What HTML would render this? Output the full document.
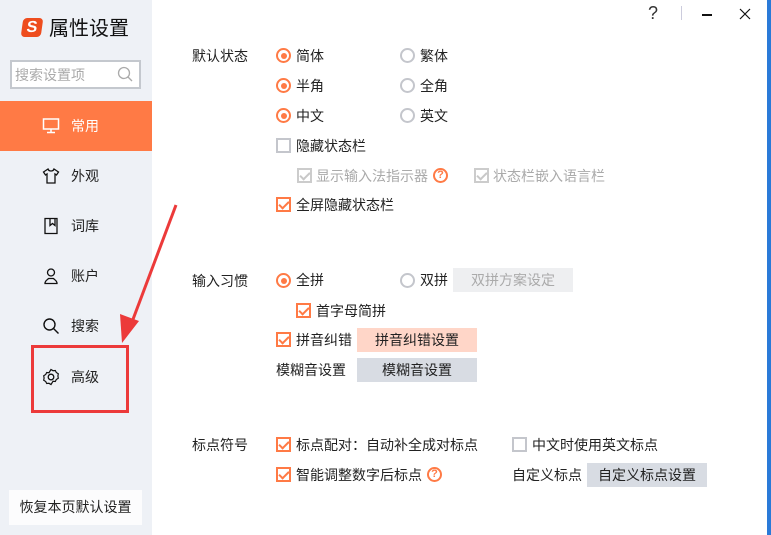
<!DOCTYPE html>
<html><head><meta charset="utf-8"><style>
*{margin:0;padding:0;box-sizing:border-box}
body{width:771px;height:535px;overflow:hidden;background:#fff;font-family:"Liberation Sans","Noto Sans CJK SC",sans-serif;font-size:14px;color:#222;position:relative}
.a{position:absolute;white-space:nowrap;line-height:20px}
#side{position:absolute;left:0;top:0;width:152px;height:535px;background:#eef1f6}
.item{position:absolute;left:0;width:152px;height:50px}
.item svg{position:absolute;left:42px;top:16px}
.item span{position:absolute;left:71px;top:15px;line-height:20px}
.rad{position:absolute;width:15px;height:15px;border-radius:50%;border:2px solid #c4c6cc;background:#fff}
.rad.on{border-color:#ff7a45}
.rad.on::after{content:"";position:absolute;left:2.5px;top:2.5px;width:6px;height:6px;border-radius:50%;background:#ff7a45}
.cb{position:absolute;width:15px;height:15px;border:2px solid #c4c6cc;background:#fff}
.cb.on{border-color:#ff7a45}
.cb.on::after{content:"";position:absolute;left:3px;top:0px;width:4px;height:8px;border:solid #ff7a45;border-width:0 2px 2px 0;transform:rotate(45deg)}
.cb.dis{border-color:#ccc}
.cb.dis::after{content:"";position:absolute;left:3px;top:0px;width:4px;height:8px;border:solid #c8c8c8;border-width:0 2px 2px 0;transform:rotate(45deg)}
.btn{position:absolute;width:120px;height:24px;line-height:24px;text-align:center}
.help{position:absolute;width:15px;height:15px;border-radius:50%;border:2px solid #ff7a45;color:#ff7a45;font-size:11px;font-weight:bold;line-height:11px;text-align:center}
.g{color:#aaa}
</style></head><body>
<div id="side">
  <div style="position:absolute;left:22px;top:18px;width:20px;height:19px;background:#ee4d1e;border-radius:4px;color:#fff;font-weight:bold;font-size:16px;line-height:19px;text-align:center;transform:skewX(-8deg)">S</div>
  <div class="a" style="left:49px;top:16px;font-size:20px;line-height:26px;color:#111">属性设置</div>
  <div style="position:absolute;left:10px;top:60px;width:131px;height:29px;border:2px solid #c4c8ce;background:#fff"></div>
  <div class="a" style="left:15px;top:65px;color:#aaa">搜索设置项</div>
  <svg style="position:absolute;left:117px;top:66px" width="16" height="16"><circle cx="7" cy="7" r="5.5" fill="none" stroke="#aaa" stroke-width="1.3"/><path d="M11 11l4 4" stroke="#aaa" stroke-width="1.3"/></svg>
  <div class="item" style="top:101px;background:#ff7a45;color:#fff">
    <svg width="18" height="18"><rect x="1.5" y="2" width="15" height="10" fill="none" stroke="#fff" stroke-width="1.5"/><path d="M9 12v3M5 15.5h8" stroke="#fff" stroke-width="1.5"/></svg><span>常用</span></div>
  <div class="item" style="top:151px"><svg width="18" height="18"><path d="M6 2L1.5 5l2 3 1.5-1v9h8V7l1.5 1 2-3L12 2c-.5 1.5-1.5 2-3 2S6.5 3.5 6 2z" fill="none" stroke="#111" stroke-width="1.3"/></svg><span>外观</span></div>
  <div class="item" style="top:201px"><svg width="18" height="18"><path d="M3 1.5h12v15H3zM8 1.5v7l2.5-2 2.5 2v-7" fill="none" stroke="#111" stroke-width="1.3"/></svg><span>词库</span></div>
  <div class="item" style="top:251px"><svg width="18" height="18"><circle cx="9" cy="5.5" r="3.5" fill="none" stroke="#111" stroke-width="1.3"/><path d="M3 16.5h12c0-2-1-3-2.5-4l-1-1H6.5l-1 1C4 13.5 3 14.5 3 16.5z" fill="none" stroke="#111" stroke-width="1.3"/></svg><span>账户</span></div>
  <div class="item" style="top:301px"><svg width="18" height="18"><circle cx="7.5" cy="7.5" r="5.5" fill="none" stroke="#111" stroke-width="1.4"/><path d="M11.5 11.5l5 5" stroke="#111" stroke-width="1.4"/></svg><span>搜索</span></div>
  <div class="item" style="top:352px"><svg width="18" height="18"><path d="M9 1.5l2 1.2 2.3-.2 1 2 2 1.3-.4 2.2.4 2.2-2 1.3-1 2-2.3-.2L9 16.5l-2-1.2-2.3.2-1-2-2-1.3.4-2.2-.4-2.2 2-1.3 1-2 2.3.2z" fill="none" stroke="#111" stroke-width="1.2"/><circle cx="9" cy="9" r="2.8" fill="none" stroke="#111" stroke-width="1.3"/></svg><span>高级</span></div>
  <div style="position:absolute;left:9px;top:490px;width:133px;height:35px;background:#fcfcfd;line-height:35px;text-align:center;color:#222">恢复本页默认设置</div>
</div>
<div style="position:absolute;left:31px;top:345px;width:98px;height:68px;border:3px solid #ec3a3a"></div>
<svg style="position:absolute;left:0;top:0" width="200" height="360"><path d="M176 205L132 322" stroke="#ec3a3a" stroke-width="3"/><path d="M122 343L120 314L139 321z" fill="#ec3a3a"/></svg>

<div class="a" style="left:648px;top:3px;font-size:18px;color:#333">?</div>
<div style="position:absolute;left:681px;top:6px;width:1px;height:14px;background:#ccd"></div>
<div style="position:absolute;left:702px;top:14px;width:10px;height:1.5px;background:#111"></div>
<svg style="position:absolute;left:739px;top:8px" width="12" height="12"><path d="M1 1l10 10M11 1L1 11" stroke="#111" stroke-width="1.2"/></svg>
<div style="position:absolute;left:767px;top:0;width:4px;height:535px;background:#2a7ad8"></div>

<div class="a" style="left:192px;top:46px">默认状态</div>
<div class="rad on" style="left:276px;top:48px"></div><div class="a" style="left:296px;top:46px">简体</div>
<div class="rad" style="left:400px;top:48px"></div><div class="a" style="left:420px;top:46px">繁体</div>
<div class="rad on" style="left:276px;top:78px"></div><div class="a" style="left:296px;top:76px">半角</div>
<div class="rad" style="left:400px;top:78px"></div><div class="a" style="left:420px;top:76px">全角</div>
<div class="rad on" style="left:276px;top:108px"></div><div class="a" style="left:296px;top:106px">中文</div>
<div class="rad" style="left:400px;top:108px"></div><div class="a" style="left:420px;top:106px">英文</div>
<div class="cb" style="left:276px;top:138px"></div><div class="a" style="left:296px;top:136px">隐藏状态栏</div>
<div class="cb dis" style="left:297px;top:168px"></div><div class="a g" style="left:316px;top:166px">显示输入法指示器</div>
<div class="help" style="left:433px;top:168px">?</div>
<div class="cb dis" style="left:474px;top:168px"></div><div class="a g" style="left:493px;top:166px">状态栏嵌入语言栏</div>
<div class="cb on" style="left:276px;top:197px"></div><div class="a" style="left:296px;top:195px">全屏隐藏状态栏</div>

<div class="a" style="left:192px;top:271px">输入习惯</div>
<div class="rad on" style="left:276px;top:273px"></div><div class="a" style="left:296px;top:270px">全拼</div>
<div class="rad" style="left:400px;top:273px"></div><div class="a" style="left:420px;top:270px">双拼</div>
<div class="btn" style="left:453px;top:268px;background:#eeeff1;color:#aaa">双拼方案设定</div>
<div class="cb on" style="left:296px;top:303px"></div><div class="a" style="left:316px;top:301px">首字母简拼</div>
<div class="cb on" style="left:276px;top:332px"></div><div class="a" style="left:296px;top:330px">拼音纠错</div>
<div class="btn" style="left:357px;top:328px;background:#ffd6c8">拼音纠错设置</div>
<div class="a" style="left:276px;top:360px">模糊音设置</div>
<div class="btn" style="left:357px;top:358px;background:#d8dce3">模糊音设置</div>

<div class="a" style="left:192px;top:435px">标点符号</div>
<div class="cb on" style="left:276px;top:437px"></div><div class="a" style="left:296px;top:435px">标点配对：自动补全成对标点</div>
<div class="cb" style="left:512px;top:437px"></div><div class="a" style="left:532px;top:435px">中文时使用英文标点</div>
<div class="cb on" style="left:276px;top:467px"></div><div class="a" style="left:296px;top:465px">智能调整数字后标点</div>
<div class="help" style="left:427px;top:467px">?</div>
<div class="a" style="left:512px;top:465px">自定义标点</div>
<div class="btn" style="left:587px;top:463px;background:#d8dce3">自定义标点设置</div>
</body></html>
